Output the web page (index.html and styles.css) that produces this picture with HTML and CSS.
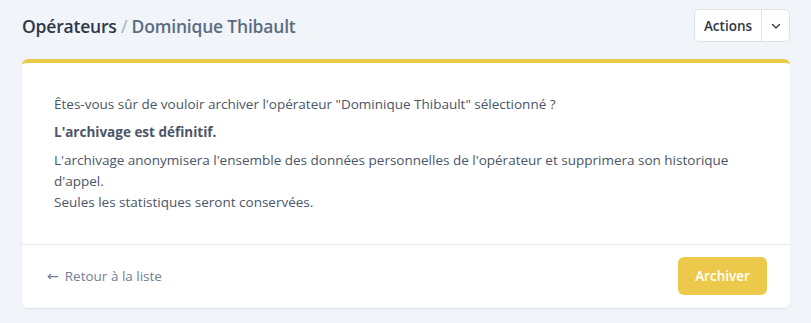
FILE: index.html
```html
<!DOCTYPE html>
<html lang="fr">
<head>
<meta charset="utf-8">
<link rel="stylesheet" href="styles.css">
</head>
<body>
<div class="page">
  <header class="head">
    <h1 class="title"><span class="crumb">Opérateurs</span> <span class="sep">/</span> <span class="name">Dominique Thibault</span></h1>
    <div class="actions">
      <span class="actions-label">Actions</span>
      <span class="actions-toggle">
        <svg width="12" height="12" viewBox="0 0 12 12"><path d="M2.5 4.5 L6 8 L9.5 4.5" fill="none" stroke="#2d3748" stroke-width="1.3" stroke-linecap="round" stroke-linejoin="round"/></svg>
      </span>
    </div>
  </header>
  <section class="card">
    <div class="card-body">
      <p>Êtes-vous sûr de vouloir archiver l'opérateur "Dominique Thibault" sélectionné ?</p>
      <p class="strong">L'archivage est définitif.</p>
      <p>L'archivage anonymisera l'ensemble des données personnelles de l'opérateur et supprimera son historique d'appel.<br>Seules les statistiques seront conservées.</p>
    </div>
    <div class="card-foot">
      <a class="back"><span class="arrow">←</span>Retour à la liste</a>
      <button class="archive">Archiver</button>
    </div>
  </section>
</div>
</body>
</html>
```
FILE: styles.css
```css
* { box-sizing: border-box; }
html, body { margin: 0; }
body {
  background: #f1f4f8;
  font-family: "Open Sans", "Noto Sans", sans-serif;
  color: #4a5568;
}
.page { padding: 9px 21px 16px 22px; }
.head {
  display: flex;
  justify-content: space-between;
  align-items: center;
  height: 33px;
  margin-bottom: 17px;
}
.title {
  margin: 0;
  font-size: 17.5px;
  font-weight: 600;
  color: #2d3748;
  letter-spacing: -0.2px;
}
.sep { color: #a0aec0; font-weight: 400; }
.name { color: #5a6b82; font-weight: 600; }
.actions {
  display: flex;
  height: 33px;
  border: 1px solid #dde2e9;
  border-radius: 5px;
  background: #fff;
  font-size: 13.5px;
  font-weight: 600;
  color: #2d3748;
  margin-left: auto;
  width: 96px;
}
.actions-label {
  display: flex; align-items: center; justify-content: center;
  width: 67px;
  border-right: 1px solid #dde2e9;
}
.actions-toggle {
  display: flex; align-items: center; justify-content: center;
  flex: 1;
}
.card {
  background: #fff;
  border-top: 4px solid #ebc94b;
  border-radius: 6px;
  box-shadow: 0 1px 2px rgba(0,0,0,0.08);
}
.card-body {
  padding: 31px 32px 31px 32px;
  font-size: 13.5px;
  line-height: 21px;
  border-bottom: 1px solid #e5e8ec;
}
.card-body p { margin: 0 0 7px 0; }
.card-body p:last-child { margin-bottom: 0; }
.strong { font-weight: 700; }
.card-foot {
  display: flex;
  justify-content: space-between;
  align-items: center;
  padding: 12px 23px 13px 25px;
}
.back { font-size: 13.5px; color: #718096; }
.arrow { font-family: "DejaVu Sans", sans-serif; font-size: 14px; margin-right: 6px; }
.archive {
  font-family: inherit;
  background: #ecc94b;
  border: 0;
  border-radius: 6px;
  color: #fff;
  font-size: 13.5px;
  font-weight: 600;
  height: 38px;
  width: 89px;
}
```
